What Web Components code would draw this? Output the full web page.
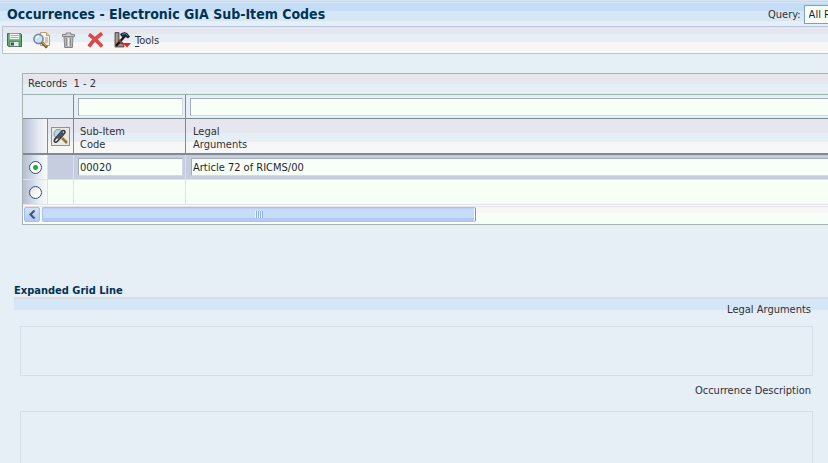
<!DOCTYPE html>
<html lang="en">
<head>
<meta charset="utf-8">
<title>Occurrences - Electronic GIA Sub-Item Codes</title>
<style>
  html, body { margin: 0; min-height: 100%; }
  html { overflow: hidden; }
  body {
    background: #e6eef6;
    color: #303038;
    font: 11px/13px Tahoma, "DejaVu Sans Condensed", "DejaVu Sans", sans-serif;
  }
</style>
</head>
<body>
<gia-page></gia-page>

<script>
const define = (name, html, init) => {
  const template = document.createElement('template');
  template.innerHTML = html;
  customElements.define(name, class extends HTMLElement {
    constructor() {
      super();
      this.attachShadow({ mode: 'open' }).append(template.content.cloneNode(true));
      if (init) init(this, this.shadowRoot);
    }
  });
};

define('form-header', `
<style>
  :host {
    display: flex; align-items: center; justify-content: space-between;
    height: 26px; box-sizing: border-box; padding: 2px 0 0 7px;
    background: linear-gradient(#d5e5f5 0 1px, #c9d9e6 1px 2px, #d5e6f7 2px 3px, #c5dcf6 3px 11px, #d5e6f7 11px 21px, #e6eef6 21px);
  }
  h1 { margin: 0; font-size: 14px; line-height: 18px; font-weight: bold; color: #003355; white-space: nowrap; }
  .query { display: flex; align-items: center; gap: 3px; flex: 0 0 60px; min-width: 0; }
  label { flex: none; }
  select {
    appearance: none; flex: 1 1 0; min-width: 0; height: 19px; padding: 0 0 0 4px; box-sizing: border-box;
    border: 1px solid #7d9fc0; border-right: 0; border-radius: 0; background: #f7fff7;
    font: inherit; color: #1f1f33; text-overflow: clip;
  }
</style>
<h1><slot></slot></h1>
<div class="query"><label for="q">Query:</label><select id="q"><option>All Records</option></select></div>
`);

define('tool-bar', `
<style>
  :host {
    display: flex; align-items: center; gap: 10px; margin-left: 2px; padding: 0 0 0 3px;
    height: 28px; box-sizing: border-box;
    border: 1px solid #b5c3dc; border-right: 0;
    background: linear-gradient(#e6e6ee 0 7px, #e6eef6 7px 15px, #f7f7f7 15px 24px, #f7fff7 24px);
  }
</style>
<slot></slot>
`);

define('tool-button', `
<style>
  :host { display: block; }
  button {
    display: flex; align-items: center; gap: 4px; padding: 0; border: 0; background: none;
    font: inherit; color: #303038; cursor: pointer;
  }
  svg { display: block; width: 17px; height: 18px; }
</style>
<button type="button"><span id="icon"></span><span><slot></slot></span></button>
`, (host, root) => {
  const icons = {
    save: `<path d="M1.500 2.500h13l1 1v12h-13l-1-1z" fill="#5fae68" stroke="#357540"/>
      <path d="M3.500 2.500h10v6h-10z" fill="#f6f8fb" stroke="#8094a8" stroke-width=".6"/><path d="M4.500 4.500h8M4.500 6.500h8" stroke="#9bb0c4"/>
      <path d="M4 10.500h9v5H4z" fill="#e4eaf0" stroke="#4d6b66" stroke-width=".7"/><path d="M5 11.500h3v3H5z" fill="#44505f"/>`,
    find: `<path d="M7.500 1.500h6l3 3v10h-9z" fill="#faf4e4" stroke="#b5a076"/><path d="M13.500 1.500v3h3" fill="#ead9ad" stroke="#b5a076"/>
      <path d="M12 7h3M12 9h3M12 11h3" stroke="#9c9c9c"/>
      <circle cx="5.500" cy="8" r="4.600" fill="#c4e5fa" stroke="#7888a8" stroke-width="1.600"/>
      <path d="M3 7.500a3 3 0 0 1 3-2.300" stroke="#fff" stroke-width="1.400" fill="none"/>
      <path d="M9 11.500l5 5" stroke="#5a4b22" stroke-width="2.800"/><path d="M9.500 11.500l4 4" stroke="#d4ac4e" stroke-width="1.200"/>`,
    trash: `<path d="M4 5.500h9l-.6 11H4.700z" fill="#b8b8b8" stroke="#858585"/>
      <path d="M2.500 5.500v-2h3.500v-1.500h5v1.500h3.500v2z" fill="#cacaca" stroke="#858585"/>
      <path d="M6.500 7v8M10.500 7v8" stroke="#909090"/><path d="M8.500 7v8" stroke="#ededed" stroke-width="1.500"/>`,
    cancel: `<path d="M2 3.500C6 6 11 11 15 15.500M15 2.500C10 6 5 11 2 15.500" fill="none" stroke="#c94444" stroke-width="3.600"/>
      <path d="M2 3.500C6 6 11 11 15 15.500M15 2.500C10 6 5 11 2 15.500" fill="none" stroke="#e04a48" stroke-width="2.300"/>`,
    tools: `<path d="M1 1.500h4v11h5v3.500H1z" fill="#8c8078" stroke="#51453f" stroke-width=".8"/>
      <path d="M2 4h1.500M2 6h1.500M2 8h1.500M2 10h1.500M4 14.500v-1M6 14.500v-1M8 14.500v-1" stroke="#e4dcd4" stroke-width=".7"/>
      <path d="M2 15L11 5" stroke="#171717" stroke-width="2.400"/><path d="M5 9l4 4" stroke="#8d3930" stroke-width="2"/>
      <path d="M6 3.500c2-2.500 5-3 7-1.500l3 3.500-2 2-3-2L8 6z" fill="#1d2530"/><path d="M8 3.500l3.500-1 2 2" stroke="#6b93bb" fill="none"/>
      <path d="M9 12h8l-4 4.500z" fill="#ef1c1c"/>`
  };
  const name = host.getAttribute('icon');
  root.getElementById('icon').innerHTML = `<svg viewBox="0 0 17 18" aria-hidden="true">${icons[name]}</svg>`;
  if (!host.textContent.trim()) {
    root.querySelector('button').setAttribute('aria-label', host.getAttribute('label'));
    root.querySelector('button').style.gap = '0';
  }
});

define('scroll-strip', `
<style>
  :host { display: flex; gap: 2px; height: 18px; box-sizing: border-box; padding: 0 1px 2px; border-top: 1px solid #e3e3e6; background: linear-gradient(#f7f7f7 0 6px, #f7fff7 6px); }
  button {
    flex: 0 0 16px; padding: 0; border: 1px solid #a4bdea; border-radius: 2px; background: linear-gradient(#d3e2fb, #b4c8f6);
    display: grid; place-items: center;
  }
  svg { width: 9px; height: 9px; }
  .thumb {
    flex: 0 0 54%; box-sizing: border-box; border: 1px solid #a8c2ee; border-radius: 2px;
    border-right-color: #7496d0; box-shadow: inset -1px 0 #f4f9ff;
    background: linear-gradient(#bccffa 0 1px, #c6dcf7 1px 10px, #b5c9f7 10px);
    display: grid; place-items: center;
  }
  .grip { width: 8px; height: 7px; background: repeating-linear-gradient(90deg, #eef5ff 0 1px, #8caee6 1px 2px); }
</style>
<button type="button" aria-label="Scroll left"><svg viewBox="0 0 9 9"><path d="M6.500 .5L2.500 4.500l4 4" fill="none" stroke="#415a7c" stroke-width="2.200"/></svg></button>
<div class="thumb"><span class="grip"></span></div>
`);

define('record-grid', `
<style>
  :host {
    display: block; margin: 19px 0 0 22px;
    border: 1px solid #a5b3b3; border-right: 0; background: #f7fff7;
  }
  table { width: 100%; border-collapse: separate; border-spacing: 0; table-layout: fixed; }
  .c1 { width: 25px; } .c2 { width: 26px; } .c3 { width: 112px; }
  caption {
    height: 20px; line-height: 20px; padding-left: 5px; text-align: left; white-space: pre;
    border-bottom: 1px solid #9cb3ae; background: linear-gradient(#e6e6ee 0 10px, #e6eef6 10px);
  }
  th, td { box-sizing: border-box; padding: 0; text-align: left; font-weight: normal; border-right: 1px solid #7e8a94; }
  th:last-child, td:last-child { border-right: 0; }
  input:not([type=radio]) {
    display: block; width: 100%; height: 18px; box-sizing: border-box; margin: 0; padding: 1px 0 0 1px;
    border: 1px solid #d5dae6; border-top-color: #a4adbd; border-left-color: #a4adbd; border-radius: 0;
    background: #f7fff7; font: inherit; color: #1f1f33;
  }
  td:last-child input:not([type=radio]) { border-right: 0; }
  .filter td { height: 24px; background: #e6eef6; border-bottom: 1px solid #7e8a94; padding: 0 2px 0 4px; }
  .filter td:last-child { padding-right: 0; }
  .head th {
    height: 36px; border-bottom: 2px solid #7e8a94; vertical-align: bottom;
    padding: 0 0 2px 6px; background: linear-gradient(#e6e6ee 0 14px, #e6eef6 14px 23px, #f7f7f7 23px);
  }
  .head th:last-child { padding-left: 7px; }
  .head th.mark { background: linear-gradient(90deg, #b9bfcd, #cbd2e3 7px, #e5e8f1 15px, #f5f5f8); }
  .head th.pin { padding: 0; vertical-align: middle; }
  .pin button { display: block; width: 19px; height: 19px; margin: 0 auto; padding: 0; border: 1px solid #969288; background: #ece9e0; }
  .pin svg { display: block; width: 17px; height: 17px; }
  .row td { height: 25px; border-color: #dde1ec; border-bottom: 1px solid #dfe2e6; padding: 0 2px 0 4px; }
  .row td:last-child { padding: 0 0 0 5px; }
  .row td.sel { padding: 0; background: linear-gradient(90deg, #b7bdcc, #ccd3e3 8px, #e9edf3 16px, #f7fbf8); }
  .row.on td { background-color: #c5cddf; }
  input[type=radio] {
    appearance: none; display: block; width: 13px; height: 13px; margin: 0 auto; box-sizing: border-box;
    border: 1px solid #2d5278; border-radius: 50%; background: linear-gradient(135deg, #e0e0e2, #fff 75%);
  }
  input[type=radio]:checked { background: radial-gradient(circle, #21b021 0 2px, #fff 3px); }
  scroll-strip { margin-top: 1px; }
</style>
<table>
  <caption>Records  1 - 2</caption>
  <colgroup><col class="c1"><col class="c2"><col class="c3"><col></colgroup>
  <thead>
    <tr class="filter"><td colspan="2"></td><td><input type="text" aria-label="Filter by Sub-Item Code"></td><td><input type="text" aria-label="Filter by Legal Arguments"></td></tr>
    <tr class="head">
      <th class="mark"></th>
      <th class="pin"><button type="button" aria-label="Attachments"><svg viewBox="0 0 17 17">
        <circle cx="6.500" cy="6" r="4.500" fill="#b9d7ec" stroke="#7f95a8"/>
        <path d="M10 10l5 5" stroke="#8b7a30" stroke-width="2.500"/>
        <path d="M2.500 11.500l7-8c2-2 4.500-.5 3 1.800l-7 8c-2 2-4.500.2-2.500-2l5.500-6" fill="none" stroke="#333a40" stroke-width="1.600"/>
        <path d="M6 10l5-5.500" stroke="#4c555d" stroke-width="3.600"/></svg></button></th>
      <th scope="col">Sub-Item<br>Code</th><th scope="col">Legal<br>Arguments</th>
    </tr>
  </thead>
  <tbody>
    <tr class="row on"><td class="sel"><input type="radio" name="row" aria-label="Record 1" checked></td><td></td>
      <td><input type="text" value="00020" aria-label="Sub-Item Code"></td><td><input type="text" value="Article 72 of RICMS/00" aria-label="Legal Arguments"></td></tr>
    <tr class="row"><td class="sel"><input type="radio" name="row" aria-label="Record 2"></td><td></td><td></td><td></td></tr>
  </tbody>
</table>
<scroll-strip></scroll-strip>
`);

define('grid-line', `
<style>
  :host { display: block; margin: 60px 0 0 14px; }
  h2 { margin: 0; font-size: 11px; line-height: 12px; font-weight: bold; color: #003355; }
  .fields {
    border-top: 2px solid #d5dde8; padding: 4px 15px 0 6px;
    background: linear-gradient(#d5e6f7 0 11px, transparent 11px);
  }
</style>
<h2>Expanded Grid Line</h2>
<div class="fields"><slot></slot></div>
`);

define('memo-field', `
<style>
  :host { display: block; margin-bottom: 8px; }
  label { display: block; text-align: right; padding: 0 2px 10px 0; }
  textarea {
    display: block; width: 100%; height: 50px; box-sizing: border-box; margin: 0; resize: none;
    border: 1px solid #d5dde8; background: transparent; font: inherit;
  }
  :host([tall]) { margin: 0; }
  :host([tall]) textarea { height: 52px; border-bottom: 0; }
  :host([tall]) label { padding-bottom: 14px; }
</style>
<label for="memo"></label>
<textarea id="memo" readonly></textarea>
`, (host, root) => { root.querySelector('label').textContent = host.getAttribute('label'); });

define('gia-page', `
<style>:host { display: block; } u { text-underline-offset: 2px; }</style>
<form-header>Occurrences - Electronic GIA Sub-Item Codes</form-header>
<tool-bar>
  <tool-button icon="save" label="Save"></tool-button>
  <tool-button icon="find" label="Find"></tool-button>
  <tool-button icon="trash" label="Delete"></tool-button>
  <tool-button icon="cancel" label="Cancel"></tool-button>
  <tool-button icon="tools"><u>T</u>ools</tool-button>
</tool-bar>
<record-grid></record-grid>
<grid-line>
  <memo-field label="Legal Arguments"></memo-field>
  <memo-field label="Occurrence Description" tall></memo-field>
</grid-line>
`);
</script>
</body>
</html>
